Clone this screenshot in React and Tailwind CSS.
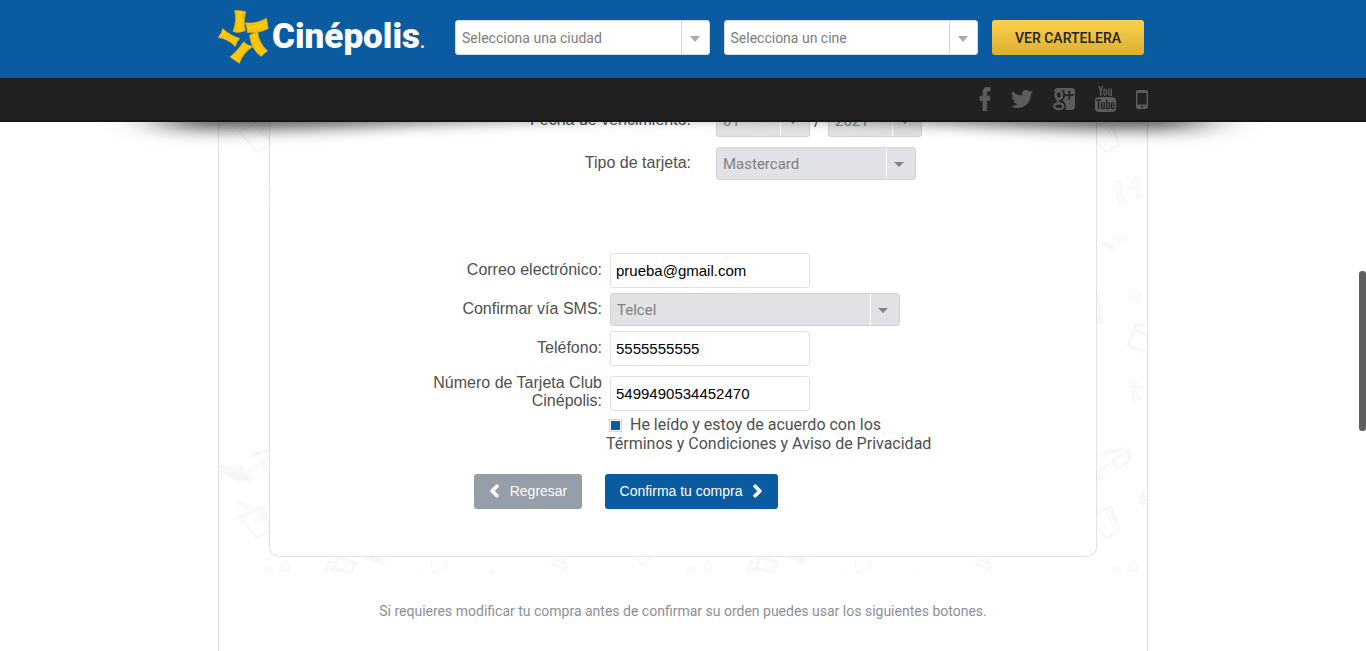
import React from "react";
import { FaFacebookF, FaTwitter, FaChevronLeft, FaChevronRight } from "react-icons/fa";
import { TfiYoutube } from "react-icons/tfi";

function StarLogo() {
  return (
    <svg viewBox="24 28 156 166" className="h-[55px] w-[52px] shrink-0" aria-hidden="true">
      <g fill="#ffc90a" stroke="#e0b21a" strokeWidth="2">
        <path d="M74 30Q92 29 107 33Q99 62 106 90Q86 100 69 93Q81 60 74 30Z" />
        <path d="M106 67Q142 70 170 53L175 84Q150 98 112 96Q113 80 106 67Z" />
        <path d="M119 104L143 93Q146 128 173 152Q162 158 154 168Q124 148 119 104Z" />
        <path d="M101 124Q112 136 129 138Q98 158 88 189L60 170Q82 152 101 124Z" />
        <path d="M38 84Q56 103 89 114Q78 124 76 138Q52 114 24 111Q34 100 38 84Z" />
      </g>
      <g fill="none" stroke="#a98a2a" strokeWidth="1.5" strokeDasharray="4 4">
        <path d="M79 33Q85 62 75 92M102 35Q95 62 101 88" />
        <path d="M110 73Q145 75 169 59M114 91Q150 92 172 80" />
        <path d="M124 106Q130 144 156 162M138 98Q142 130 168 153" />
        <path d="M102 130Q86 154 66 172M122 140Q94 158 84 183" />
        <path d="M40 90Q58 108 84 118M29 108Q54 110 75 130" />
      </g>
    </svg>
  );
}

function GooglePlusIcon() {
  return (
    <svg viewBox="0 0 22 24" className="h-6 w-[22px]" aria-hidden="true">
      <path fill="currentColor" d="M1 5Q1 1 5 1H18.500Q22 1 22 4.500V19.500Q22 23 18.500 23H12.500Q14 17 10.500 14.500Q9 13.300 10.500 12Q13.500 9 11 5L12 3.500H6Q3 3.500 1 5Z" />
      <path fill="#212121" d="M15.500 3.500h1.700v3.800h3.600v1.700h-3.600v3.800h-1.700V9h-3.600V7.300h3.600Z" />
      <ellipse cx="5.800" cy="8" rx="3.200" ry="4" fill="none" stroke="currentColor" strokeWidth="2.600" />
      <path d="M5 12.500Q3.500 15 7 16" fill="none" stroke="currentColor" strokeWidth="2" />
      <ellipse cx="5.800" cy="19.300" rx="4.600" ry="2.900" fill="none" stroke="currentColor" strokeWidth="2.200" />
    </svg>
  );
}

function MobileIcon() {
  return (
    <svg viewBox="0 0 12 19" className="h-[19px] w-3" aria-hidden="true">
      <rect width="12" height="19" rx="2" fill="currentColor" />
      <rect x="1.500" y="3" width="9" height="11.500" fill="#212121" />
      <rect x="5" y="16" width="2" height="1.500" fill="#212121" />
    </svg>
  );
}

function HeaderShadow() {
  return (
    <svg
      viewBox="0 0 1366 50"
      preserveAspectRatio="none"
      className="pointer-events-none absolute inset-x-0 top-full h-[50px] w-full"
      aria-hidden="true"
    >
      <defs>
        <filter id="soft" x="-10%" y="-100%" width="120%" height="300%">
          <feGaussianBlur stdDeviation="30 8" />
        </filter>
      </defs>
      <path
        d="M150 -30H1216L1196 8Q1060 8 950 0Q683 -14 416 0Q306 8 170 8Z"
        fill="#000"
        fillOpacity=".66"
        filter="url(#soft)"
      />
    </svg>
  );
}

function Cup({ x, y }) {
  return (
    <g transform={`translate(${x} ${y})`}>
      <path d="M1 2L8 3L12 9M2 17L27 5" strokeWidth="3" />
      <path d="M4 17L21 37L34 30L27 6M21 9L27 22M24 8L30 20" strokeWidth="2" />
    </g>
  );
}

function Glasses({ x, y, s = 1 }) {
  return (
    <g transform={`translate(${x} ${y}) scale(${s})`} fill="#f7f7f7" stroke="none">
      <path d="M0 17Q12 19 24 18L28 34Q14 34 5 25L4 30Q0 26 0 17Z" />
      <path d="M31 10Q31 4 38 3L57 0L48 5Q38 6 35 10Z" />
      <path
        fillRule="evenodd"
        d="M27 24L59 1L62 10L59 16L48 22L44 19L38 28L30 35L26 33ZM30 24V31L35 30L43 21L42 16ZM46 13V18L50 19L58 13L56 6Z"
      />
    </g>
  );
}

function Posts({ x, y }) {
  return (
    <g transform={`translate(${x} ${y})`} strokeWidth="1.500">
      <circle cx="4" cy="8" r="3.500" />
      <circle cx="21" cy="3.500" r="3.500" />
      <path d="M3 11L5 22L4 26L12 24L8 21L6 11M7 12Q14 15 19 8M20 7L23 17L22 21L29 19L25 16L23 6" />
    </g>
  );
}

function Chair({ x, y }) {
  return (
    <path
      transform={`translate(${x} ${y})`}
      d="M3 6V2Q6 -1 9 2V6M1 5H3V8H9V5H11V10H1ZM3 10V12M9 10V12"
      strokeWidth="1.200"
    />
  );
}

function Cards({ x, y }) {
  return (
    <path
      transform={`translate(${x} ${y})`}
      d="M13 0L30 6L26 16L9 11ZM10 6L4 5L0 16M4 12L12 14"
      strokeWidth="3"
    />
  );
}

function Sun({ x, y }) {
  return (
    <g transform={`translate(${x} ${y})`}>
      <path d="M0 8L8 14M16 0L17 8M33 2L27 11" strokeWidth="1.500" />
      <path d="M13 14Q20 8 27 14Z" fill="#f7f7f7" stroke="none" />
    </g>
  );
}

function Cone({ x, y }) {
  return (
    <path transform={`translate(${x} ${y})`} d="M0 7L15 13L12 0M4 7L9 0M8 4L13 6" strokeWidth="2" />
  );
}

function MoviePattern() {
  return (
    <svg className="absolute inset-0 h-full w-full" aria-hidden="true">
      <g transform="translate(-219 -104)" fill="none" stroke="#f7f7f7">
        <Cup x={236} y={115} />
        <Cup x={236} y={501} />
        <Cup x={1085} y={115} />
        <Cup x={1085} y={501} />
        <Glasses x={219} y={448} />
        <Glasses x={1070} y={447} />
        <Posts x={1114} y={177} />
        <Posts x={265} y={563} />
        <Posts x={265} y={179} />
        <Posts x={687} y={563} />
        <Posts x={1113} y={563} />
        <Posts x={1129} y={375} />
        <Glasses x={1101} y={235} s={0.42} />
        <Chair x={1129} y={290} />
        <g transform="translate(1139 488) scale(1.5)">
          <Chair x={0} y={0} />
        </g>
        <path d="M1097 291H1099L1104 324H1097Z" fill="#f7f7f7" stroke="none" />
        <path d="M1148 326L1136 324L1128 346L1148 353M1134 330L1148 335" strokeWidth="3" />
        <Cards x={325} y={557} />
        <Cards x={747} y={557} />
        <Glasses x={365} y={543} s={0.6} />
        <Glasses x={788} y={543} s={0.6} />
        <Sun x={415} y={560} />
        <Sun x={839} y={560} />
        <Cone x={551} y={557} />
        <Cone x={975} y={557} />
        <path d="M637 557L642 565L651 557M489 573Q491 569 494 573M912 573Q914 569 917 573" strokeWidth="2" />
      </g>
    </svg>
  );
}

function HeaderSelect({ label }) {
  return (
    <div className="relative h-[35px] min-w-0 flex-1">
      <select
        aria-label={label}
        className="h-full w-full appearance-none rounded-[3px] border border-[#d8dbe0] bg-white pt-0.5 pr-8 pl-1.5 text-sm text-[#7d7d7d]"
      >
        <option>{label}</option>
      </select>
      <span className="pointer-events-none absolute inset-y-px right-0 flex w-[29px] items-center justify-center border-l border-[#d5d5d5] pt-1 pr-0.5">
        <span className="border-x-5 border-t-6 border-x-transparent border-t-[#aaaaaa]" />
      </span>
    </div>
  );
}

function FormSelect({ id, label, value, width }) {
  return (
    <div className={`relative h-[33px] ${width}`}>
      <select
        id={id}
        aria-label={label}
        className="h-full w-full appearance-none rounded-[3px] border border-[#d3d4d7] bg-[#e1e2e6] pt-0.5 pr-8 pl-1.5 text-[15px] text-[#808080]"
      >
        <option>{value}</option>
      </select>
      <span className="pointer-events-none absolute inset-y-px right-px flex w-[29px] items-center justify-center border-l border-white pt-0.5 pr-1">
        <span className="border-x-5 border-t-5 border-x-transparent border-t-[#808285]" />
      </span>
    </div>
  );
}

function FieldRow({ id, label, children }) {
  return (
    <div className="flex items-center gap-2">
      <label
        htmlFor={id}
        className="w-[332px] shrink-0 pb-0.5 pl-[160px] text-right font-['Liberation_Sans',sans-serif] text-base leading-[18px] text-[#4f4f4f]"
      >
        {label}
      </label>
      {children}
    </div>
  );
}

function TextField({ id, type = "text", value }) {
  return (
    <input
      id={id}
      type={type}
      defaultValue={value}
      className="h-[35px] w-[200px] rounded-[3px] border border-[#e0e1e5] bg-white px-[5px] font-['Liberation_Sans',sans-serif] text-[15px] text-black"
    />
  );
}

const topLabel =
  "w-[421px] shrink-0 pb-0.5 text-right font-['Liberation_Sans',sans-serif] text-base leading-[18px] text-[#4f4f4f]";

const socialLinks = [
  { name: "Facebook", icon: <FaFacebookF className="h-6 w-3" preserveAspectRatio="none" stroke="currentColor" strokeWidth={16} /> },
  { name: "Twitter", icon: <FaTwitter className="h-[22px] w-[22px]" /> },
  { name: "Google Plus", icon: <GooglePlusIcon /> },
  { name: "YouTube", icon: <TfiYoutube className="h-[26px] w-[21px]" preserveAspectRatio="xMidYMid slice" /> },
  { name: "Móvil", icon: <MobileIcon /> },
];

export default function App() {
  return (
    <div className="flex min-h-screen flex-col bg-white font-[Roboto,sans-serif]">
      <header className="sticky top-0 z-20">
        <div className="bg-[#0b5ba1]">
          <div className="mx-auto flex h-[78px] max-w-[930px] items-center pr-1">
            <a href="#inicio" className="flex h-full w-[237px] shrink-0 items-center text-white">
              <span className="pb-1">
                <StarLogo />
              </span>
              <span className="flex items-baseline pb-1 pl-0.5 text-[35px] leading-none font-black">
                Cinépolis<span className="text-base">.</span>
              </span>
            </a>
            <form className="flex min-w-0 flex-1 items-center gap-3.5 pb-1">
              <HeaderSelect label="Selecciona una ciudad" />
              <HeaderSelect label="Selecciona un cine" />
              <button
                type="button"
                className="h-[35px] w-38 shrink-0 rounded-[3px] bg-linear-to-b from-[#fad04c] to-[#ddb02f] pt-0.5 text-sm font-medium text-[#222222]"
              >
                VER CARTELERA
              </button>
            </form>
          </div>
        </div>
        <div className="border-b-2 border-[#161616] bg-[#212121]">
          <nav className="mx-auto flex h-[42px] max-w-[930px] items-center justify-end gap-5 text-[#5c5c5c]">
            {socialLinks.map((s) => (
              <a key={s.name} href="#redes" aria-label={s.name}>
                {s.icon}
              </a>
            ))}
          </nav>
        </div>
        <HeaderShadow />
      </header>

      <main className="mx-auto -mt-[18px] w-full max-w-[930px] flex-1 border-x border-[#e2e2e2]">
        <section className="relative overflow-hidden px-[50px] pb-4">
          <MoviePattern />
          <form className="relative rounded-b-[10px] border-x border-b border-[#e0e1e4] bg-white pb-[47px]">
            <div className="flex items-center gap-[25px]">
              <label htmlFor="mes" className={topLabel}>
                Fecha de vencimiento:
              </label>
              <div className="flex items-center gap-1 text-base text-[#4f4f4f]">
                <FormSelect id="mes" value="01" width="w-[94px]" />
                <span className="w-2.5">/</span>
                <FormSelect label="Año de vencimiento" value="2021" width="w-[94px]" />
              </div>
            </div>
            <div className="mt-2.5 flex items-center gap-[25px]">
              <label htmlFor="tipo" className={topLabel}>
                Tipo de tarjeta:
              </label>
              <FormSelect id="tipo" value="Mastercard" width="w-[200px]" />
            </div>

            <div className="mt-[73px] flex flex-col gap-[5px]">
              <FieldRow id="correo" label="Correo electrónico:">
                <TextField id="correo" type="email" value="prueba@gmail.com" />
              </FieldRow>
              <FieldRow id="sms" label="Confirmar vía SMS:">
                <FormSelect id="sms" value="Telcel" width="w-[290px]" />
              </FieldRow>
              <FieldRow id="telefono" label="Teléfono:">
                <TextField id="telefono" type="tel" value="5555555555" />
              </FieldRow>
            </div>
            <div className="mt-2">
              <FieldRow id="club" label="Número de Tarjeta Club Cinépolis:">
                <TextField id="club" value="5499490534452470" />
              </FieldRow>
            </div>

            <label className="mt-[3px] ml-[336px] block w-[330px] text-base leading-[19px] text-[#4f4f4f]">
              <input
                type="checkbox"
                defaultChecked
                className="mr-2 ml-[3px] h-[13px] w-[13px] appearance-none border border-[#d2d4d8] bg-white p-px align-[-2px] checked:bg-[#0b5ba1] checked:bg-clip-content"
              />
              He leído y estoy de acuerdo con los Términos y Condiciones y Aviso de Privacidad
            </label>

            <div className="mt-[21px] ml-[204px] flex gap-[23px] font-['Liberation_Sans',sans-serif] text-sm text-white">
              <button type="button" className="flex h-[35px] w-[108px] items-center justify-center gap-2.5 rounded-[3px] bg-[#969eaa] pb-0.5">
                <FaChevronLeft className="h-3.5 w-[11px]" stroke="currentColor" strokeWidth={50} />
                Regresar
              </button>
              <button type="button" className="flex h-[35px] w-[173px] items-center justify-center gap-2.5 rounded-[3px] bg-[#0b5ba1] pb-0.5">
                Confirma tu compra
                <FaChevronRight className="h-3.5 w-[11px]" stroke="currentColor" strokeWidth={50} />
              </button>
            </div>
          </form>
        </section>
        <p className="mt-7 text-center text-sm text-[#8b9095]">
          Si requieres modificar tu compra antes de confirmar su orden puedes usar los siguientes botones.
        </p>
      </main>

      <div className="fixed top-[271px] right-0 z-30 h-40 w-[7px] rounded-[3px] bg-[#5f5f5f]" aria-hidden="true" />
    </div>
  );
}
